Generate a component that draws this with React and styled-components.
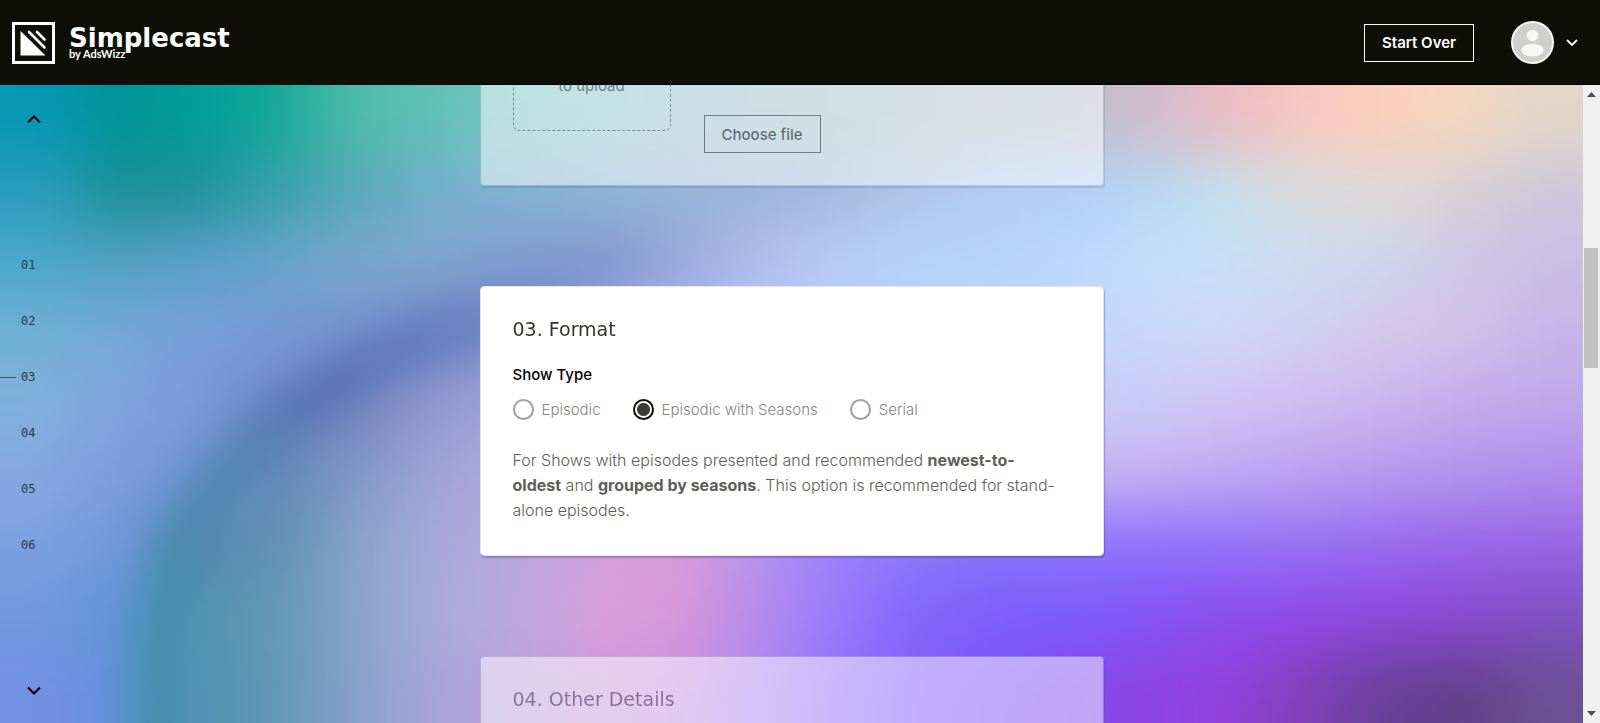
import React, { useLayoutEffect, useRef, useState } from 'react';
import styled, { createGlobalStyle } from 'styled-components';

// one row of colours per band of the backdrop, left to right
const WASH = [
   '0698b4 009298 009e98 14a898 50bcac 60c0b8 78c4c4 88c4d0 90c0d0 98c0cc a0c0c8 a8c0c4 b4c4c8 bcc0cc d0bccc ecbcc4 f8c8c0 fcd0bc f4d8c0 e4d6c8',
   '2a9cbc 1a9098 20909c 38a0ac 58a8b8 74b0cc 84b0d4 8cb4d8 94b4d8 9cb4d8 a4b8dc b0c4e8 b4ccf4 b0d0fa b4d8f4 c4e0ec d8dcdc e0dad8 d8d0d4 ccc8dc',
   '4aa8cc 54a0c0 5ca0cc 68a4cc 7ca8d0 80a4d0 809cd0 8098cc 98a8dc b0bcec b8ccf8 b4d4fc b4d4fc bcd8fc c4dffb c8e0f8 ccdcf0 d0d4ec ccc8e8 c8c0e4',
   '70b0d4 74a8d8 78a0d8 7898d4 7490cc 7488c4 7c90cc a0b0e8 a8b8f0 b0c4f8 b4ccfc b8d0fc bcd4fc c0d4fb c8d8fb d0d8f8 d2d0f2 d4c8ec d4c0e8 c8b4e8',
   '80b0dc 80a4dc 7c98d8 7088c8 7484bc 9098d0 a0a4dc b0acdc b8b0e4 b8b8ec bcc0f4 bcc4f8 c0c8f8 c4ccf8 ccccf6 d0c4f4 d0bcf0 ccb4ee c4acec c0a8ec',
   '84a8e0 7c9cdc 7094d4 6088b4 8098c8 a0a4d8 b0a8dc c0a4dc c8a0dc b8a0e4 b4a4ec b8a8f0 bcb0f0 c4b4f0 c4b0f2 c0a8f2 bca0f0 b898ee b094ec b08cec',
   '7ca0e0 7098dc 5488b0 6090b4 88a4cc a8a8dc b8a8e0 d0a0dc dc9cd8 b894ec 9880fc 8c78fa 8470fa 8874fc 8c70fc 9070fa 9470f4 9868f0 9864ec 9864e4',
   '7098e0 6094d8 5094b0 6498b8 88a4c8 a8acdc bca8e0 d8a0d8 dc98d8 b88ce8 9c7cfc 8068fc 7c60fc 7c5cfc 8454f8 8c4cf0 9048e8 9048e0 8c48d4 8050c4',
   '7490e4 6490dc 5090b0 6098b8 88a0cc a8a4dc b9a1dd cd99dd c991e1 b189f1 9171f9 8161f9 8151f5 8449ed 8c44e4 9440dc 8040b8 684098 644088 6c5094',
].map((row) => row.split(' '));

const STEPS = ['01', '02', '03', '04', '05', '06'];
const SHOW_TYPES = ['Episodic', 'Episodic with Seasons', 'Serial'];

const BAND = 71;

const Backdrop = () => (
   <Wash viewBox="0 0 1600 639" preserveAspectRatio="none" aria-hidden="true">
      <defs>
         <filter id="soft" filterUnits="userSpaceOnUse" x="-160" y="-160" width="1920" height="960" colorInterpolationFilters="sRGB">
            <feGaussianBlur stdDeviation="22 30" />
         </filter>
         <filter id="blurArc" filterUnits="userSpaceOnUse" x="0" y="0" width="1000" height="800" colorInterpolationFilters="sRGB">
            <feGaussianBlur stdDeviation="17" />
         </filter>
         <linearGradient id="arc" gradientUnits="userSpaceOnUse" x1="170" y1="600" x2="700" y2="160">
            <stop offset="0" stopColor="#3c90a4" />
            <stop offset="0.3" stopColor="#4a80a8" />
            <stop offset="0.45" stopColor="#4c66ac" />
            <stop offset="0.65" stopColor="#5c78bc" />
            <stop offset="1" stopColor="#7c90cc" stopOpacity="0" />
         </linearGradient>
         {WASH.map((row, r) => (
            <linearGradient key={r} id={`band${r}`} gradientUnits="userSpaceOnUse" x1="40" y1="0" x2="1560" y2="0">
               {row.map((color, c) => (
                  <stop key={c} offset={c / (row.length - 1)} stopColor={`#${color}`} />
               ))}
            </linearGradient>
         ))}
      </defs>
      <g filter="url(#soft)">
         {WASH.map((row, r) => {
            // the outer bands run past the edge so the blur never fades out
            const top = r === 0 ? -160 : r * BAND;
            const bottom = r === WASH.length - 1 ? 800 : (r + 1) * BAND + 1;
            return <rect key={r} x="-160" y={top} width="1920" height={bottom - top} fill={`url(#band${r})`} />;
         })}
      </g>
      <path
         d="M158 720 C150 560 162 470 226 392 C286 325 368 275 460 243 S640 190 760 130"
         fill="none" stroke="url(#arc)" strokeWidth="54" opacity="0.6" filter="url(#blurArc)"
      />
   </Wash>
);

const Caret = ({ up }) => (
   <svg width="14" height="9" viewBox="0 0 14 9" fill="none" stroke="currentColor" strokeWidth="2">
      <path d={up ? 'M1 7.5 7 1.5l6 6' : 'M1 1.5l6 6 6-6'} />
   </svg>
);

const Logo = () => (
   <svg width="43" height="42" viewBox="0 0 43 42" aria-hidden="true">
      <rect x="1.5" y="1.5" width="40" height="39" fill="none" stroke="#fff" strokeWidth="3" />
      <path d="M8.500 9v24.500h25z" fill="#fff" />
      <path d="M17 10l15.500 15.500M25 10l7.500 7.500" stroke="#fff" strokeWidth="2.600" strokeLinecap="round" />
   </svg>
);

const Avatar = () => (
   <svg width="43" height="43" viewBox="0 0 43 43" aria-hidden="true">
      <circle cx="21.5" cy="21.5" r="20.500" fill="#cfcfcd" stroke="#f7f7f5" strokeWidth="2" />
      <circle cx="21.5" cy="14.500" r="5.800" fill="#f7f7f5" />
      <path d="M10.500 29c0-4 5-6 11-6s11 2 11 6-5 6.500-11 6.500-11-2.500-11-6.500z" fill="#f7f7f5" />
   </svg>
);

const App = () => {
   const [showType, setShowType] = useState('Episodic with Seasons');
   const current = useRef(null);

   useLayoutEffect(() => {
      current.current.scrollIntoView({ block: 'start' });
   }, []);

   return (
      <Page>
         <GlobalStyle />
         <Header>
            <Brand href="#">
               <Logo />
               <BrandText>
                  <BrandName>Simplecast</BrandName>
                  <BrandBy>by AdsWizz</BrandBy>
               </BrandText>
            </Brand>
            <StartOver type="button">Start Over</StartOver>
            <Account type="button" aria-label="Account">
               <Avatar />
               <svg width="12" height="8" viewBox="0 0 12 8" fill="none" stroke="#fff" strokeWidth="1.800">
                  <path d="M1 1l5 5 5-5" />
               </svg>
            </Account>
         </Header>

         <Body>
            <Stage>
               <Backdrop />
               <StepNav aria-label="Steps">
                  <StepArrow type="button" aria-label="Previous step"><Caret up /></StepArrow>
                  <StepList>
                     {STEPS.map((step) => (
                        <Step key={step}>
                           <StepMark $on={step === '03'} />
                           <a href={`#step-${step}`}>{step}</a>
                        </Step>
                     ))}
                  </StepList>
                  <StepArrow type="button" aria-label="Next step"><Caret /></StepArrow>
               </StepNav>

               <Scroller>
                  <Card $dim>
                     <UploadRow>
                        <DropZone>to upload</DropZone>
                        <ChooseFile type="button">Choose file</ChooseFile>
                     </UploadRow>
                  </Card>

                  <Card ref={current}>
                     <Title>03. Format</Title>
                     <ShowType>
                        <legend>Show Type</legend>
                        <Options>
                           {SHOW_TYPES.map((type) => (
                              <Option key={type}>
                                 <Radio
                                    name="show-type"
                                    checked={showType === type}
                                    onChange={() => setShowType(type)}
                                 />
                                 {type}
                              </Option>
                           ))}
                        </Options>
                     </ShowType>
                     <Hint>
                        For Shows with episodes presented and recommended <b>newest-to-oldest</b> and{' '}
                        <b>grouped by seasons</b>. This option is recommended for stand-alone episodes.
                     </Hint>
                  </Card>

                  <Card $dim $tall>
                     <Title>04. Other Details</Title>
                  </Card>
               </Scroller>
            </Stage>

            <ScrollRail aria-hidden="true">
               <svg width="9" height="5" viewBox="0 0 9 5"><path d="M0 5 4.500 0 9 5z" fill="#505050" /></svg>
               <Track><Thumb /></Track>
               <svg width="9" height="5" viewBox="0 0 9 5"><path d="M0 0h9L4.500 5z" fill="#505050" /></svg>
            </ScrollRail>
         </Body>
      </Page>
   );
};

export default App;


const GlobalStyle = createGlobalStyle`
   *{
      box-sizing: border-box;
   }

   body{
      margin: 0;
      font-family: Inter, "Liberation Sans", sans-serif;
      font-size: 15px;
      color: #0e0f09;
   }

   button{
      font: inherit;
      background: none;
      cursor: pointer;
   }
`;

const Page = styled.div`
   display: flex;
   flex-direction: column;
   height: 100vh;
`;

const Header = styled.header`
   display: flex;
   align-items: center;
   flex: none;
   height: 85px;
   padding: 0 22px 0 12px;
   background: #0e0f09;
   box-shadow: inset 0 -1px 0 #000;
   color: #fff;
`;

const Brand = styled.a`
   display: flex;
   align-items: center;
   gap: 14px;
   margin-right: auto;
   color: inherit;
   text-decoration: none;
`;

const BrandText = styled.span`
   display: flex;
   flex-direction: column;
`;

const BrandName = styled.span`
   font-family: "DejaVu Sans", sans-serif;
   font-weight: 700;
   font-size: 26px;
   line-height: 22px;
`;

const BrandBy = styled.span`
   font-family: Lato, sans-serif;
   font-weight: 700;
   font-size: 11px;
   line-height: 10px;
`;

const StartOver = styled.button`
   height: 38px;
   padding: 0 17px;
   border: 1px solid #fff;
   color: #fff;
   font-weight: 600;
`;

const Account = styled.button`
   display: flex;
   align-items: center;
   gap: 12px;
   margin-left: 37px;
   padding: 0;
   border: 0;
`;

const Body = styled.div`
   display: flex;
   flex: 1;
   min-height: 0;
`;

const Stage = styled.main`
   position: relative;
   display: grid;
   grid-template-columns: 1fr 624px 1fr;
   flex: 1;
   min-height: 0;
   overflow: hidden;
`;

const Wash = styled.svg`
   position: absolute;
   inset: 0;
   width: 100%;
   height: 100%;
`;

const StepNav = styled.nav`
   position: relative;
   display: flex;
   flex-direction: column;
   justify-content: space-between;
   align-items: flex-start;
   padding: 24px 0 22px 16px;
`;

const StepArrow = styled.button`
   display: flex;
   padding: 6px 11px;
   border: 0;
   color: #000;
`;

const StepList = styled.ol`
   display: flex;
   flex-direction: column;
   gap: 38px;
   margin: 0 0 0 -16px;
   padding: 0;
   list-style: none;
`;

const Step = styled.li`
   display: flex;
   align-items: center;
   gap: 5px;
   height: 18px;

   a{
      color: #2c3a40;
      font-family: "DejaVu Sans Mono", monospace;
      font-size: 12px;
      text-decoration: none;
   }
`;

const StepMark = styled.span`
   width: 16px;
   height: 1px;
   background: ${(props) => (props.$on ? '#40505c' : 'transparent')};
`;

const Scroller = styled.div`
   position: relative;
   display: flex;
   flex-direction: column;
   gap: 100px;
   overflow-y: auto;
   scrollbar-width: none;
   margin-right: -4px;
   padding-right: 4px;
`;

const Card = styled.section`
   flex: none;
   min-height: ${(props) => (props.$tall ? '600px' : '0')};
   padding: 32px;
   scroll-margin-top: 201px;
   border: 1px solid ${(props) => (props.$dim ? 'rgba(180, 190, 200, 0.4)' : '#e4e4ea')};
   border-radius: 4px;
   background: ${(props) => (props.$dim ? 'rgba(255, 255, 255, 0.5)' : '#fff')};
   background-clip: padding-box;
   box-shadow: 1px 2px 1px rgba(60, 60, 110, ${(props) => (props.$dim ? 0.16 : 0.32)});
   color: ${(props) => (props.$dim ? 'rgba(30, 10, 50, 0.55)' : '#0e0f09')};
`;

const UploadRow = styled.div`
   display: flex;
   align-items: flex-end;
   gap: 33px;
`;

const DropZone = styled.div`
   display: flex;
   align-items: flex-end;
   justify-content: center;
   width: 158px;
   height: 158px;
   margin-bottom: 22px;
   padding-bottom: 32px;
   border: 1px dashed rgba(40, 60, 70, 0.5);
   border-radius: 6px;
   color: rgba(14, 25, 30, 0.5);
   line-height: 24px;
`;

const ChooseFile = styled.button`
   height: 38px;
   padding: 0 17px;
   border: 1px solid rgba(30, 45, 55, 0.55);
   color: rgba(14, 25, 30, 0.6);
   font-weight: 500;
`;

const Title = styled.h2`
   margin: 0 0 24px;
   color: inherit;
   opacity: 0.85;
   font-family: "DejaVu Sans", sans-serif;
   font-weight: 400;
   font-size: 19px;
   line-height: 20px;
`;

const ShowType = styled.fieldset`
   margin: 0;
   padding: 0;
   border: 0;

   legend{
      padding: 0;
      color: #000;
      font-weight: 500;
      line-height: 24px;
   }
`;

const Options = styled.div`
   display: flex;
   gap: 32px;
   margin-top: 10px;
`;

const Option = styled.label`
   display: flex;
   align-items: center;
   gap: 8px;
   height: 24px;
   color: #85857f;
   font-weight: 300;
`;

const Radio = styled.input.attrs({ type: 'radio' })`
   appearance: none;
   width: 21px;
   height: 21px;
   margin: 0;
   border: 2px solid #a0a09e;
   border-radius: 50%;

   &:checked{
      border-color: #0e0f09;
      background: radial-gradient(circle, #3c3c38 6px, #fff 7px);
   }
`;

const Hint = styled.p`
   margin: 27px 0 0;
   padding-right: 8px;
   color: #5e5e58;
   font-weight: 300;
   font-size: 16px;
   line-height: 25px;

   b{
      font-weight: 700;
   }
`;

const ScrollRail = styled.div`
   display: flex;
   flex-direction: column;
   align-items: center;
   gap: 6px;
   width: 17px;
   padding: 7px 0;
   background: #f0f0f0;
`;

const Track = styled.div`
   flex: 1;
   align-self: stretch;
   padding: 0 2px 0 1px;
`;

const Thumb = styled.div`
   height: 20%;
   margin-top: 145px;
   background: #c1c1c1;
`;
